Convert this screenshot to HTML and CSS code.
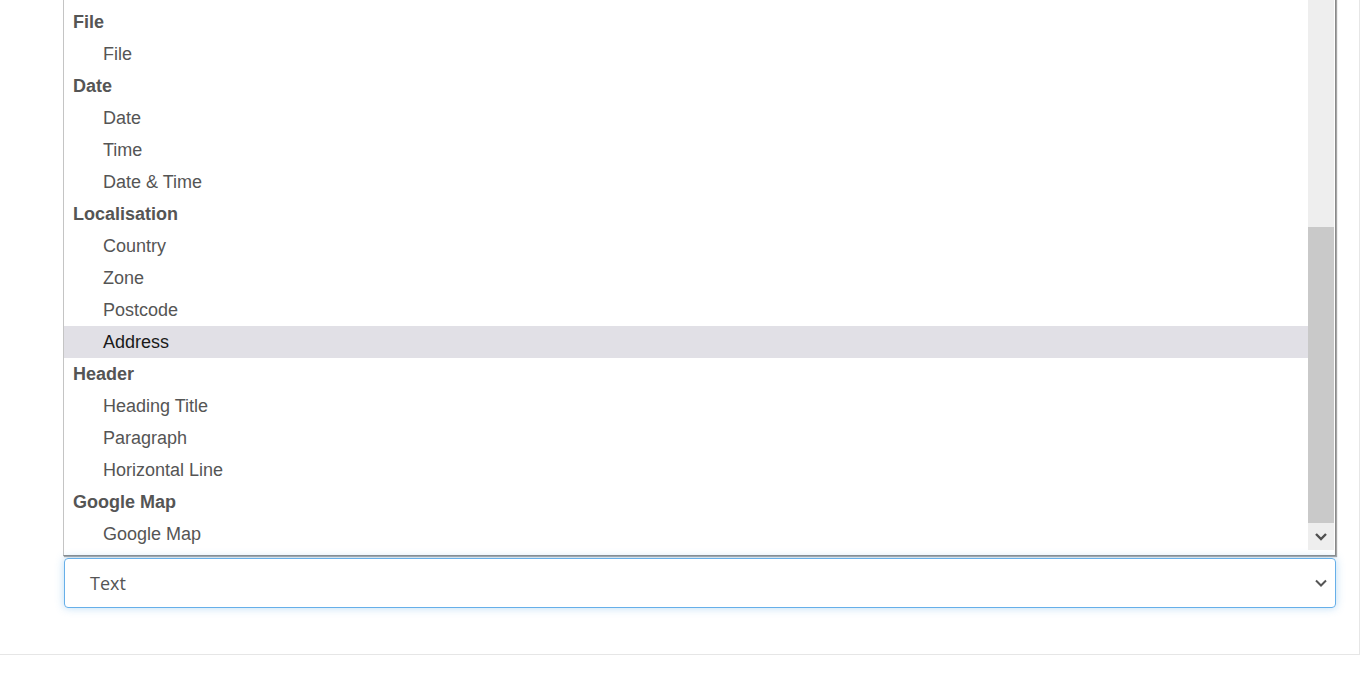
FILE: index.html
```html
<!DOCTYPE html>
<html lang="en">
<head>
    <meta charset="UTF-8">
    <title>Custom Field Type</title>
    <link rel="stylesheet" href="styles.css">
</head>
<body>
    <div class="panel">
        <div class="field">
            <div class="listbox">
                <ul class="options">
                    <li class="group">File</li>
                    <li class="item">File</li>
                    <li class="group">Date</li>
                    <li class="item">Date</li>
                    <li class="item">Time</li>
                    <li class="item">Date &amp; Time</li>
                    <li class="group">Localisation</li>
                    <li class="item">Country</li>
                    <li class="item">Zone</li>
                    <li class="item">Postcode</li>
                    <li class="item selected">Address</li>
                    <li class="group">Header</li>
                    <li class="item">Heading Title</li>
                    <li class="item">Paragraph</li>
                    <li class="item">Horizontal Line</li>
                    <li class="group">Google Map</li>
                    <li class="item">Google Map</li>
                </ul>
                <div class="scrollbar">
                    <div class="track"></div>
                    <div class="thumb"></div>
                    <div class="arrow">
                        <svg width="14" height="10" viewBox="0 0 14 10"><path d="M2 2 L7 7 L12 2" fill="none" stroke="#505050" stroke-width="2.4"/></svg>
                    </div>
                </div>
            </div>
            <div class="select">
                <span>Text</span>
                <svg width="14" height="10" viewBox="0 0 14 10"><path d="M2 2.5 L7 7.5 L12 2.5" fill="none" stroke="#555" stroke-width="2"/></svg>
            </div>
        </div>
    </div>
</body>
</html>
```

FILE: styles.css
```css
body {
    margin: 0;
    padding: 0;
    background-color: #fff;
    font-family: 'Liberation Sans', Arial, sans-serif;
}
.panel {
    display: flow-root;
    width: 1359px;
    height: 654px;
    border-right: 1px solid #e6e6e6;
    border-bottom: 1px solid #e6e6e6;
    background-color: #fff;
}
.field {
    padding-left: 63px;
    width: 1273px;
}
.listbox {
    display: flex;
    height: 558px;
    margin-top: -2px;
    border: 1px solid #c4c4c4;
    border-right-color: #8a8a8a;
    border-bottom-color: #8a8a8a;
    box-shadow: 1px 1px 1px rgba(0, 0, 0, 0.35);
    box-sizing: border-box;
    background-color: #fff;
}
.options {
    flex: 1;
    list-style: none;
    margin: 0;
    padding: 7px 0 0;
}
.options li {
    height: 32px;
    line-height: 32px;
    font-size: 18px;
    color: #555;
}
.group {
    font-weight: bold;
    padding-left: 9px;
    color: #4a4a4a;
}
.item {
    padding-left: 39px;
}
.item.selected {
    background-color: #e1e0e6;
    color: #1a1a1a;
}
.scrollbar {
    width: 26px;
    display: flex;
    flex-direction: column;
    padding: 1px 1px 5px 0;
}
.track {
    height: 227px;
    background-color: #eeeeee;
}
.thumb {
    height: 296px;
    background-color: #c9c9c9;
}
.arrow {
    height: 27px;
    background-color: #eeeeee;
    display: flex;
    align-items: center;
    justify-content: center;
}
.select {
    display: flex;
    align-items: center;
    justify-content: space-between;
    margin: 2px 0 0 1px;
    height: 50px;
    padding: 0 7px 0 25px;
    border: 1px solid #66afe9;
    border-radius: 4px;
    box-shadow: 0 0 8px rgba(102, 175, 233, 0.45);
    box-sizing: border-box;
    font-family: 'Open Sans', sans-serif;
    font-size: 18px;
    color: #555;
}
```
